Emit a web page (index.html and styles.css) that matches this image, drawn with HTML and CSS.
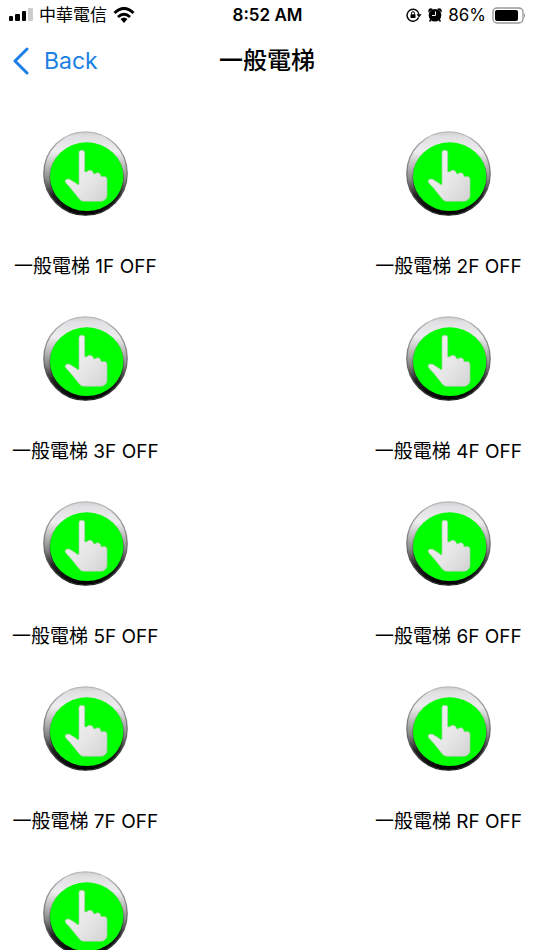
FILE: index.html
```
<!DOCTYPE html>
<html lang="zh-Hant">
<head>
<meta charset="utf-8">
<meta name="viewport" content="width=device-width, initial-scale=1">
<title>一般電梯</title>
<link rel="stylesheet" href="styles.css">
</head>
<body>
<svg class="defs" aria-hidden="true">
  <defs>
    <linearGradient id="rim" x1="0" y1="0" x2="0" y2="1">
      <stop offset="0" stop-color="#cfcfcf"/>
      <stop offset=".06" stop-color="#e0e0e2"/>
      <stop offset=".24" stop-color="#eeeef0"/>
      <stop offset=".38" stop-color="#c4c4c4"/>
      <stop offset=".58" stop-color="#858585"/>
      <stop offset=".76" stop-color="#222"/>
      <stop offset="1" stop-color="#000"/>
    </linearGradient>
    <linearGradient id="edge" x1="0" y1="0" x2="0" y2="1">
      <stop offset="0" stop-color="#bbb"/>
      <stop offset=".5" stop-color="#777"/>
      <stop offset="1" stop-color="#222"/>
    </linearGradient>
    <linearGradient id="bevel" x1="0" y1="0" x2="0" y2="1">
      <stop offset="0" stop-color="#9c9" stop-opacity=".4"/>
      <stop offset=".45" stop-color="#444" stop-opacity=".6"/>
      <stop offset="1" stop-color="#000"/>
    </linearGradient>
    <linearGradient id="hand" x1="0" y1="0" x2="1" y2="1">
      <stop offset="0" stop-color="#f4f4f4"/>
      <stop offset=".6" stop-color="#e6e6e6"/>
      <stop offset="1" stop-color="#d2d2d2"/>
    </linearGradient>
    <symbol id="push" viewBox="39 33 255 255">
      <circle cx="166.500" cy="160.500" r="125" fill="url(#rim)" stroke="url(#edge)" stroke-width="4"/>
      <ellipse cx="170" cy="171" rx="112" ry="104" fill="url(#bevel)"/>
      <ellipse cx="170" cy="170" rx="110" ry="103" fill="#0f0"/>
      <path d="M147 97Q147 91 155 91Q164 91 164 97V155L170 156Q173 150 181 151Q189 152 191 161L195 162Q200 157 207 159Q213 162 213 170L218 170Q230 167 231 179V226Q231 234 226 238Q221 244 213 244H162Q153 244 148 237L119 201Q103 187 106 181Q110 175 119 178L137 189L143 194Q147 195 147 190Z" fill="url(#hand)" stroke="#a5cfa5" stroke-width="2" stroke-linejoin="round"/>
    </symbol>
  </defs>
</svg>
<div class="screen">
  <div class="status">
    <div class="status-left">
      <svg width="24" height="14" viewBox="0 0 24 14" aria-hidden="true">
        <rect x="0" y="8" width="4" height="5" rx="1"/>
        <rect x="6" y="6" width="5" height="7" rx="1"/>
        <rect x="13" y="3" width="4" height="10" rx="1"/>
        <rect x="19" y="0" width="5" height="13" rx="1" fill="#ccc"/>
      </svg>
      <span class="carrier">中華電信</span>
      <svg width="22" height="16" viewBox="0 0 22 16" fill="none" stroke="#000" stroke-width="3" aria-hidden="true">
        <path d="M1.500 6Q11-3 20.500 6"/>
        <path d="M5 10Q11 4.500 17 10"/>
        <path d="M7.500 12Q11 9 14.500 12L11 16Z" fill="#000" stroke="none"/>
      </svg>
    </div>
    <time class="clock">8:52 AM</time>
    <div class="status-right">
      <svg width="16" height="14" viewBox="0 0 16 14" aria-hidden="true">
        <path d="M12.600 9.500A6 6 0 1 1 13 6.500" fill="none" stroke="#000" stroke-width="1.400"/>
        <path d="M10.500 6.200H15.600L13 9.600Z"/>
        <rect x="4.500" y="6.300" width="5" height="3.800" rx=".6"/>
        <path d="M5.500 6.500V5.200A1.500 1.500 0 0 1 8.500 5.200V6.500" fill="none" stroke="#000"/>
      </svg>
      <svg width="14" height="14" viewBox="0 0 14 14" aria-hidden="true">
        <path d="M.3 4.500V2.500Q.5.300 3 .3L5 1ZM13.700 4.500V2.500Q13.500.300 11 .3L9 1Z"/>
        <circle cx="7" cy="7.300" r="6.300"/>
        <path d="M3 11.500L1.500 13.500M11 11.500L12.500 13.500" stroke="#000" stroke-width="1.500"/>
        <path d="M7.500 3.500V7.500H4" fill="none" stroke="#fff" stroke-width="1"/>
      </svg>
      <span class="percent">86%</span>
      <svg width="34" height="17" viewBox="0 0 34 17" aria-hidden="true">
        <rect x="1" y="1" width="30" height="15" rx="4" fill="none" stroke="#999" stroke-width="1.400"/>
        <rect x="3" y="3" width="23" height="11" rx="2"/>
        <path d="M32 6Q34 8.500 32 11Z" fill="#999"/>
      </svg>
    </div>
  </div>
  <header class="nav">
    <a class="back" href="#">
      <svg width="16" height="28" viewBox="0 0 16 28" fill="none" stroke="#1b7fe4" stroke-width="3" stroke-linecap="round" stroke-linejoin="round" aria-hidden="true"><path d="M14 2L2 14L14 26"/></svg>
      <span>Back</span>
    </a>
    <h1 class="title">一般電梯</h1>
  </header>
  <main class="grid">
    <button class="floor" type="button"><svg class="push" aria-hidden="true"><use href="#push"/></svg><span>一般電梯 1F OFF</span></button>
    <button class="floor" type="button"><svg class="push" aria-hidden="true"><use href="#push"/></svg><span>一般電梯 2F OFF</span></button>
    <button class="floor" type="button"><svg class="push" aria-hidden="true"><use href="#push"/></svg><span>一般電梯 3F OFF</span></button>
    <button class="floor" type="button"><svg class="push" aria-hidden="true"><use href="#push"/></svg><span>一般電梯 4F OFF</span></button>
    <button class="floor" type="button"><svg class="push" aria-hidden="true"><use href="#push"/></svg><span>一般電梯 5F OFF</span></button>
    <button class="floor" type="button"><svg class="push" aria-hidden="true"><use href="#push"/></svg><span>一般電梯 6F OFF</span></button>
    <button class="floor" type="button"><svg class="push" aria-hidden="true"><use href="#push"/></svg><span>一般電梯 7F OFF</span></button>
    <button class="floor" type="button"><svg class="push" aria-hidden="true"><use href="#push"/></svg><span>一般電梯 RF OFF</span></button>
    <button class="floor" type="button" aria-label="一般電梯"><svg class="push" aria-hidden="true"><use href="#push"/></svg></button>
  </main>
</div>
</body>
</html>
```
FILE: styles.css
```
* {
  box-sizing: border-box;
}

body {
  margin: 0;
  background: #fff;
  color: #000;
  font-family: Inter, "Noto Sans CJK TC", sans-serif;
}

.defs {
  position: absolute;
  width: 0;
  height: 0;
}

.screen {
  display: flex;
  flex-direction: column;
  height: 100vh;
  overflow: hidden;
}

.status {
  display: grid;
  grid-template-columns: 1fr auto 1fr;
  align-items: center;
  flex: none;
  height: 30px;
  padding: 0 8px 0 9px;
  font-size: 17px;
  line-height: 20px;
}

.status-left,
.status-right {
  display: flex;
  align-items: center;
  gap: 6px;
}

.status-right {
  justify-content: flex-end;
}

.clock {
  font-weight: 600;
}

.nav {
  display: grid;
  grid-template-columns: 1fr auto 1fr;
  align-items: center;
  flex: none;
  height: 62px;
  padding: 0 13px;
}

.back {
  display: flex;
  align-items: center;
  gap: 15px;
  color: #1b7fe4;
  font-size: 23px;
  line-height: 28px;
  text-decoration: none;
}

.title {
  margin: 0;
  font-size: 24px;
  font-weight: 500;
  line-height: 28px;
}

.grid {
  display: grid;
  grid-template-columns: auto auto;
  justify-content: space-between;
  grid-auto-rows: 185px;
  flex: 1;
  min-height: 0;
  padding: 39px 12px 0;
  overflow-y: auto;
  scrollbar-width: none;
}

.floor {
  display: flex;
  flex-direction: column;
  align-items: center;
  gap: 37px;
  padding: 0;
  border: 0;
  background: none;
  color: inherit;
  font: inherit;
  font-size: 19px;
  line-height: 28px;
  cursor: pointer;
}

.push {
  width: 85px;
  height: 85px;
  flex: none;
}
```
